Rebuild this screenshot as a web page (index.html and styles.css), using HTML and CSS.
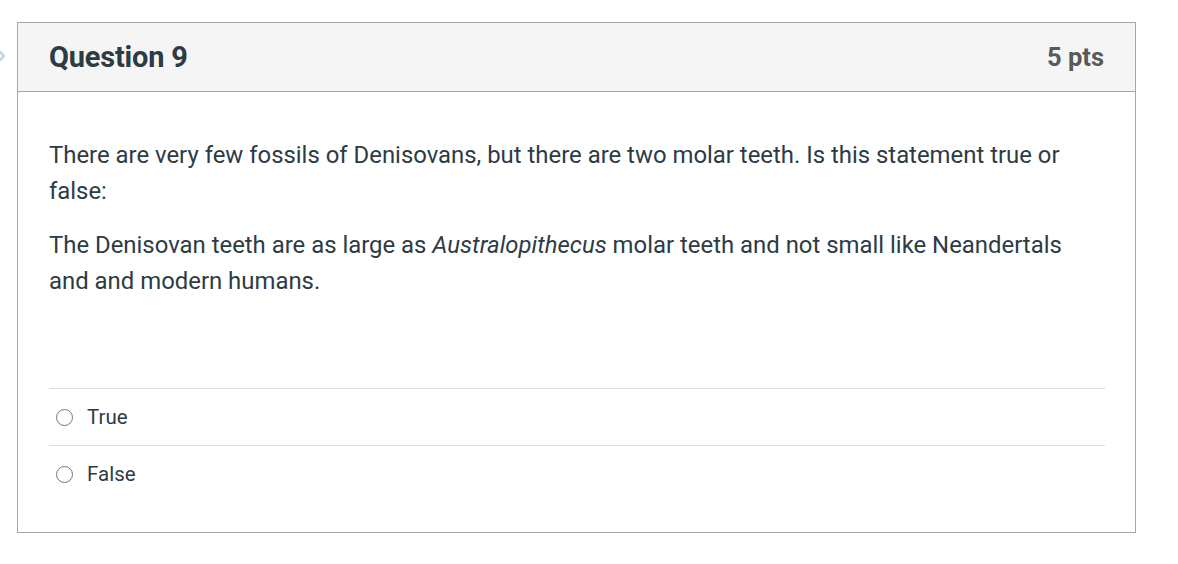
FILE: index.html
```html
<!DOCTYPE html>
<html>
<head>
<meta charset="utf-8">
<link rel="stylesheet" href="styles.css">
</head>
<body>
<div class="page">
  <svg class="side-mark" width="8" height="16" viewBox="0 0 8 16"><path d="M-2 2 L4 8 L-2 14" fill="none" stroke="#c5d3df" stroke-width="2.5"/></svg>
  <div class="card">
    <div class="card-header">
      <h2 class="q-title">Question 9</h2>
      <span class="q-pts">5 pts</span>
    </div>
    <div class="card-body">
      <div class="q-text">
        <p>There are very few fossils of Denisovans, but there are two molar teeth. Is this statement true or false:</p>
        <p>The Denisovan teeth are as large as <em>Australopithecus</em> molar teeth and not small like Neandertals and and modern humans.</p>
      </div>
      <div class="answers">
        <label class="answer"><span class="radio"></span><span class="answer-label">True</span></label>
        <label class="answer"><span class="radio"></span><span class="answer-label">False</span></label>
      </div>
    </div>
  </div>
</div>
</body>
</html>
```
FILE: styles.css
```css
html, body {
  margin: 0;
  padding: 0;
  background: #ffffff;
}
body {
  font-family: Roboto, "Liberation Sans", Arial, sans-serif;
  color: #2d3b45;
}
.page {
  position: relative;
  padding: 22px 0 0 17px;
  width: 1119px;
}
.side-mark {
  position: absolute;
  left: 0;
  top: 48px;
}
.card {
  border: 1px solid #a6a6a6;
  background: #fff;
}
.card-header {
  display: flex;
  justify-content: space-between;
  align-items: center;
  background: #f5f5f5;
  border-bottom: 1px solid #a6a6a6;
  height: 68px;
  padding: 0 31px 0 31px;
}
.q-title {
  margin: 0;
  font-size: 29px;
  font-weight: 700;
  color: #2d3b45;
  letter-spacing: -0.2px;
}
.q-pts {
  font-size: 25.5px;
  font-weight: 700;
  color: #595959;
}
.card-body {
  padding: 45px 30px 30px 31px;
}
.q-text p {
  margin: 0 0 18px 0;
  font-size: 23.9px;
  line-height: 36px;
}
.q-text em {
  font-style: italic;
}
.answers {
  margin-top: 89px;
}
.answer {
  display: flex;
  align-items: center;
  height: 56px;
  border-top: 1px solid #dddddd;
  padding-left: 7px;
}
.radio {
  width: 17px;
  height: 17px;
  border: 1.5px solid #757575;
  border-radius: 50%;
  box-sizing: border-box;
  flex: none;
}
.answer-label {
  margin-left: 14px;
  font-size: 20.5px;
  color: #2d3b45;
}
```
